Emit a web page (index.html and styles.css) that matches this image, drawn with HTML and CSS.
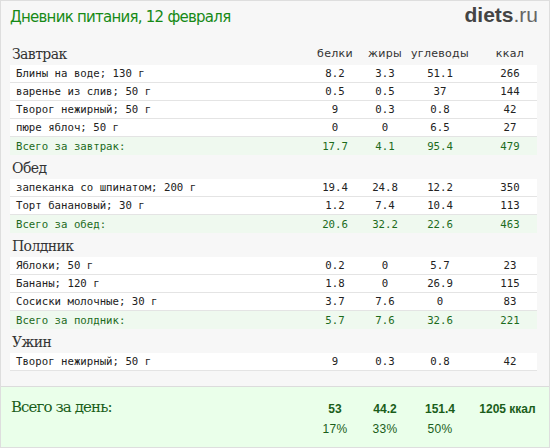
FILE: index.html
```html
<!DOCTYPE html>
<html lang="ru">
<head>
<meta charset="utf-8">
<title>Дневник питания</title>
<link rel="stylesheet" href="styles.css">
</head>
<body>
<div class="page">
  <div class="top">
    <div class="title">Дневник питания, 12 февраля</div>
    <div class="logo">diets<span class="ru">.ru</span></div>
  </div>

  <div class="meal first">
    <div class="head">
      <div class="meal-name">Завтрак</div>
      <div class="col">белки</div>
      <div class="col">жиры</div>
      <div class="col">углеводы</div>
      <div class="col last">ккал</div>
    </div>
    <div class="row"><div class="name">Блины на воде; 130 г</div><div class="col">8.2</div><div class="col">3.3</div><div class="col">51.1</div><div class="col last">266</div></div>
    <div class="row"><div class="name">варенье из слив; 50 г</div><div class="col">0.5</div><div class="col">0.5</div><div class="col">37</div><div class="col last">144</div></div>
    <div class="row"><div class="name">Творог нежирный; 50 г</div><div class="col">9</div><div class="col">0.3</div><div class="col">0.8</div><div class="col last">42</div></div>
    <div class="row"><div class="name">пюре яблоч; 50 г</div><div class="col">0</div><div class="col">0</div><div class="col">6.5</div><div class="col last">27</div></div>
    <div class="row total"><div class="name">Всего за завтрак:</div><div class="col">17.7</div><div class="col">4.1</div><div class="col">95.4</div><div class="col last">479</div></div>
  </div>

  <div class="meal">
    <div class="head"><div class="meal-name">Обед</div></div>
    <div class="row"><div class="name">запеканка со шпинатом; 200 г</div><div class="col">19.4</div><div class="col">24.8</div><div class="col">12.2</div><div class="col last">350</div></div>
    <div class="row"><div class="name">Торт банановый; 30 г</div><div class="col">1.2</div><div class="col">7.4</div><div class="col">10.4</div><div class="col last">113</div></div>
    <div class="row total"><div class="name">Всего за обед:</div><div class="col">20.6</div><div class="col">32.2</div><div class="col">22.6</div><div class="col last">463</div></div>
  </div>

  <div class="meal">
    <div class="head"><div class="meal-name">Полдник</div></div>
    <div class="row"><div class="name">Яблоки; 50 г</div><div class="col">0.2</div><div class="col">0</div><div class="col">5.7</div><div class="col last">23</div></div>
    <div class="row"><div class="name">Бананы; 120 г</div><div class="col">1.8</div><div class="col">0</div><div class="col">26.9</div><div class="col last">115</div></div>
    <div class="row"><div class="name">Сосиски молочные; 30 г</div><div class="col">3.7</div><div class="col">7.6</div><div class="col">0</div><div class="col last">83</div></div>
    <div class="row total"><div class="name">Всего за полдник:</div><div class="col">5.7</div><div class="col">7.6</div><div class="col">32.6</div><div class="col last">221</div></div>
  </div>

  <div class="meal">
    <div class="head"><div class="meal-name">Ужин</div></div>
    <div class="row"><div class="name">Творог нежирный; 50 г</div><div class="col">9</div><div class="col">0.3</div><div class="col">0.8</div><div class="col last">42</div></div>
  </div>

  <div class="day">
    <div class="day-line">
      <div class="day-name">Всего за день:</div>
      <div class="col">53</div>
      <div class="col">44.2</div>
      <div class="col">151.4</div>
      <div class="col last">1205 ккал</div>
    </div>
    <div class="day-line pct">
      <div class="day-name"></div>
      <div class="col">17%</div>
      <div class="col">33%</div>
      <div class="col">50%</div>
      <div class="col last"></div>
    </div>
  </div>
</div>
</body>
</html>
```

FILE: styles.css
```css
html, body {
  margin: 0;
  padding: 0;
}

body {
  font-family: "DejaVu Sans", Verdana, sans-serif;
  background: #ffffff;
}

.page {
  width: 550px;
  height: 448px;
  box-sizing: border-box;
  border: 1px solid #dedede;
  background: #f7f7f7;
  display: flex;
  flex-direction: column;
}

.top {
  display: flex;
  justify-content: space-between;
  align-items: center;
  height: 32px;
  padding: 0 11px 0 9px;
}

.title {
  color: #168a16;
  font-size: 15px;
  letter-spacing: -0.75px;
}

.logo {
  font-family: "Liberation Sans", Arial, sans-serif;
  font-size: 21px;
  font-weight: bold;
  color: #444444;
  margin-top: -4px;
}

.logo .ru {
  font-weight: normal;
  color: #666666;
}

.meal {
  margin: 0 12px 0 9px;
}

.head,
.row,
.day-line {
  display: grid;
  grid-template-columns: 300px 50px 50px 60px 1fr;
}

.head {
  height: 24px;
  align-items: end;
  padding-bottom: 3px;
  box-sizing: border-box;
}

.meal.first .head {
  height: 32px;
}

.meal-name {
  font-family: "DejaVu Serif", Georgia, serif;
  font-size: 14px;
  line-height: 16px;
  letter-spacing: -0.6px;
  color: #333333;
  padding-left: 2px;
}

.head .col {
  font-size: 11px;
  line-height: 16px;
  letter-spacing: 0.3px;
  color: #333333;
}

.col {
  text-align: center;
  white-space: nowrap;
}

.col.last {
  padding-left: 13px;
}

.row {
  height: 18px;
  align-items: center;
  box-sizing: border-box;
  background: #ffffff;
  border-bottom: 1px solid #e4e4e4;
  font-family: "DejaVu Sans Mono", "Liberation Mono", monospace;
  font-size: 10.7px;
  color: #222222;
}

.row .name {
  padding-left: 6px;
  white-space: nowrap;
}

.row.total {
  background: #eff9ef;
  border-bottom: none;
  color: #1c6b1c;
}

.day {
  margin-top: auto;
  height: 61px;
  box-sizing: border-box;
  border-top: 1px solid #dcdcdc;
  background: #eaffea;
  padding: 11px 12px 0 9px;
}

.day-line {
  color: #1a5e1a;
  align-items: baseline;
}

.day-name {
  font-family: "DejaVu Serif", Georgia, serif;
  font-size: 15px;
  letter-spacing: -0.9px;
  padding-left: 1px;
}

.day-line .col {
  font-family: "Liberation Sans", Arial, sans-serif;
  font-size: 12px;
  font-weight: bold;
  position: relative;
  top: 1px;
}

.day-line .col.last {
  padding-left: 8px;
}

.day-line.pct {
  margin-top: 6px;
}

.day-line.pct .col {
  font-weight: normal;
  letter-spacing: 0.3px;
  top: 0;
}
```
